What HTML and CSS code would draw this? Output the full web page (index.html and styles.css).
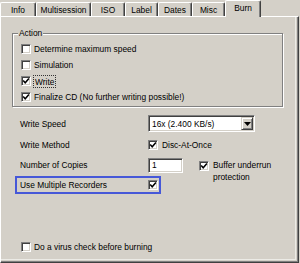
FILE: index.html
```html
<!DOCTYPE html>
<html>
<head>
<meta charset="utf-8">
<link rel="stylesheet" href="styles.css">
</head>
<body>
<div class="window">
  <div class="tabs">
    <div class="tab tab-info">Info</div>
    <div class="tab tab-multi">Multisession</div>
    <div class="tab tab-iso">ISO</div>
    <div class="tab tab-label">Label</div>
    <div class="tab tab-dates">Dates</div>
    <div class="tab tab-misc">Misc</div>
    <div class="tab tab-burn tab-active">Burn</div>
  </div>
  <div class="panel">
    <fieldset class="group">
      <legend>Action</legend>
      <div class="check-row"><span class="cb"></span><span>Determine maximum speed</span></div>
      <div class="check-row"><span class="cb"></span><span>Simulation</span></div>
      <div class="check-row"><span class="cb"><svg viewBox="0 0 8 8" width="8" height="8"><path d="M1.2 3.6 L3.2 5.8 L6.9 1.6" fill="none" stroke="#000" stroke-width="1.5"/></svg></span><span class="focus">Write</span></div>
      <div class="check-row"><span class="cb"><svg viewBox="0 0 8 8" width="8" height="8"><path d="M1.2 3.6 L3.2 5.8 L6.9 1.6" fill="none" stroke="#000" stroke-width="1.5"/></svg></span><span>Finalize CD (No further writing possible!)</span></div>
    </fieldset>
    <div class="settings">
      <div class="setting setting-speed">
        <span class="label">Write Speed</span>
        <div class="combo">
          <span class="combo-text">16x (2.400 KB/s)</span>
          <span class="combo-btn"><svg viewBox="0 0 7 4" width="7" height="4"><path d="M0 0 H7 L3.5 4 Z" fill="#000"/></svg></span>
        </div>
      </div>
      <div class="setting setting-method">
        <span class="label">Write Method</span>
        <span class="cb"><svg viewBox="0 0 8 8" width="8" height="8"><path d="M1.2 3.6 L3.2 5.8 L6.9 1.6" fill="none" stroke="#000" stroke-width="1.5"/></svg></span>
        <span class="cb-text">Disc-At-Once</span>
      </div>
      <div class="setting setting-copies">
        <span class="label label-top">Number of Copies</span>
        <div class="edit">1</div>
        <span class="cb cb-buffer"><svg viewBox="0 0 8 8" width="8" height="8"><path d="M1.2 3.6 L3.2 5.8 L6.9 1.6" fill="none" stroke="#000" stroke-width="1.5"/></svg></span>
        <span class="buffer-text">Buffer underrun<br>protection</span>
      </div>
      <div class="setting setting-multi">
        <span class="label">Use Multiple Recorders</span>
        <span class="cb"><svg viewBox="0 0 8 8" width="8" height="8"><path d="M1.2 3.6 L3.2 5.8 L6.9 1.6" fill="none" stroke="#000" stroke-width="1.5"/></svg></span>
      </div>
    </div>
    <div class="check-row virus"><span class="cb"></span><span>Do a virus check before burning</span></div>
  </div>
</div>
</body>
</html>
```
FILE: styles.css
```css
html, body {
  margin: 0;
  padding: 0;
}
body {
  background: #d4d0c8;
  font-family: "Liberation Sans", Arial, sans-serif;
  font-size: 8.4px;
  color: #000;
  width: 300px;
  height: 263px;
  overflow: hidden;
}
.window {
  width: 300px;
  height: 263px;
}
.tabs {
  display: flex;
  align-items: flex-end;
  height: 16px;
}
.tab {
  box-sizing: border-box;
  height: 14px;
  border-top: 1px solid #fff;
  border-left: 1px solid #fff;
  border-right: 1px solid #404040;
  box-shadow: inset -1px 0 0 #808080;
  border-radius: 2px 2px 0 0;
  display: flex;
  align-items: center;
  justify-content: center;
  line-height: 10px;
  padding-top: 1px;
}
.tab-info { width: 36px; }
.tab-multi { width: 55px; }
.tab-iso { width: 34px; }
.tab-label { width: 33px; }
.tab-dates { width: 34px; }
.tab-misc { width: 33px; }
.tab-burn { width: 36px; }
.tab-active {
  height: 17px;
  margin-bottom: -1px;
  position: relative;
  z-index: 1;
  background: #d4d0c8;
  padding-top: 0;
  padding-bottom: 2px;
}
.panel {
  box-sizing: border-box;
  width: 299px;
  height: 247px;
  border-top: 1px solid #fff;
  border-left: 1px solid #fff;
  border-right: 1px solid #404040;
  border-bottom: 1px solid #404040;
  box-shadow: inset -1px -1px 0 #808080, inset -2px -2px 0 #d4d0c8, inset -3px -3px 0 #ecebe6;
}
.group {
  box-sizing: border-box;
  width: 271px;
  margin: 11px 0 0 11px;
  padding: 3px 0 1px 8px;
  border: 1px solid #808080;
  box-shadow: inset 1px 1px 0 #fff, 1px 1px 0 #fff;
  min-inline-size: 0;
}
.group legend {
  margin-left: -3px;
  padding: 0 1px;
  line-height: 10px;
  background: #d4d0c8;
}
.check-row {
  display: flex;
  align-items: center;
  height: 16px;
  gap: 3px;
  white-space: nowrap;
}
.cb {
  box-sizing: border-box;
  flex: none;
  width: 10px;
  height: 10px;
  background: #fff;
  border: 1px solid;
  border-color: #808080 #fff #fff #808080;
  box-shadow: inset 1px 1px 0 #404040, inset -1px -1px 0 #d4d0c8;
  display: flex;
}
.cb svg {
  display: block;
}
.focus {
  outline: 1px dotted #333;
  outline-offset: 0;
  padding: 1px 1px 0 1px;
  line-height: 10px;
}
.settings {
  margin: 8px 0 0 14px;
}
.setting {
  display: flex;
  align-items: center;
  padding-left: 5px;
  white-space: nowrap;
}
.label {
  width: 128px;
  flex: none;
}
.setting-speed { height: 17px; }
.setting-method { height: 26px; }
.setting-copies {
  height: 18px;
  align-items: flex-start;
}
.setting-multi {
  box-sizing: border-box;
  width: 146px;
  height: 18px;
  border: 2px solid #4658d8;
  padding-left: 3px;
}
.label-top {
  line-height: 12px;
  margin-top: 1px;
}
.cb-text {
  margin-left: 4px;
}
.combo, .edit {
  box-sizing: border-box;
  background: #fff;
  border: 1px solid;
  border-color: #808080 #fff #fff #808080;
  padding: 1px;
  box-shadow: inset 1px 1px 0 #404040, inset -1px -1px 0 #d4d0c8;
}
.combo {
  width: 107px;
  height: 17px;
  display: flex;
  align-items: center;
}
.combo-text {
  padding-left: 2px;
  flex: 1;
}
.combo-btn {
  box-sizing: border-box;
  width: 12px;
  height: 13px;
  background: #d4d0c8;
  border: 1px solid;
  border-color: #d4d0c8 #404040 #404040 #d4d0c8;
  box-shadow: inset 1px 1px 0 #fff, inset -1px -1px 0 #808080;
  display: flex;
  align-items: center;
  justify-content: center;
}
.edit {
  width: 35px;
  height: 15px;
  padding-left: 3px;
  line-height: 11px;
}
.cb-buffer {
  margin-left: 16px;
  margin-top: 3px;
}
.buffer-text {
  margin-left: 4px;
  line-height: 12px;
  margin-top: 1px;
}
.virus {
  margin-top: 45px;
  padding-left: 20px;
}
```
